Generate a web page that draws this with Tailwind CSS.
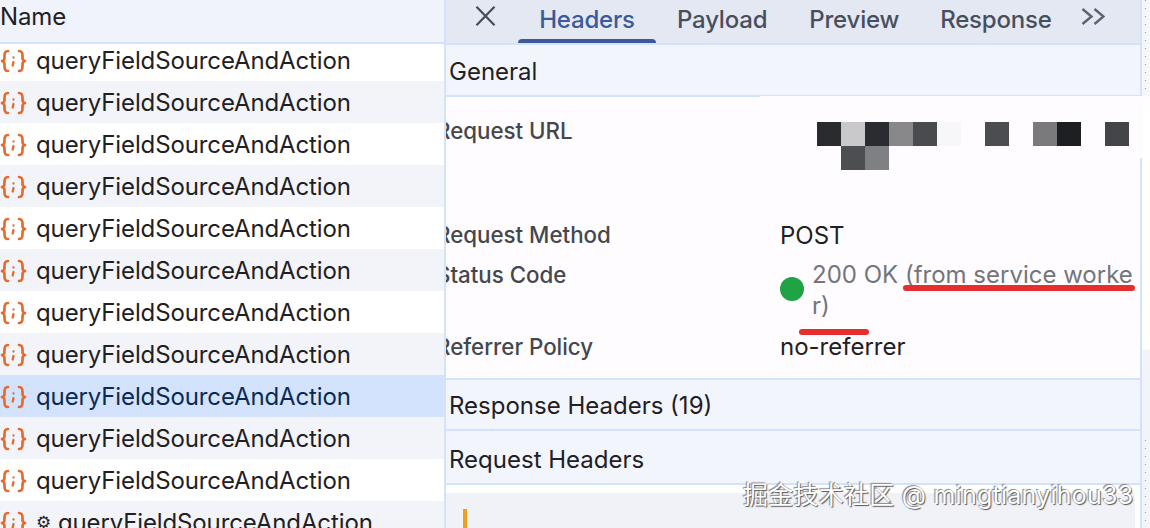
<!DOCTYPE html>
<html lang="en">
<head>
  <meta charset="UTF-8">
  <title>Network panel</title>
  <script src="https://cdn.jsdelivr.net/npm/@tailwindcss/browser@4"></script>
</head>
<body class="bg-[#f3f5fb] font-['Inter','Noto_Sans_CJK_SC',sans-serif] text-[#1f2023]">
  <div class="relative flex h-[528px] w-[1150px] overflow-hidden">

    <!-- Request list -->
    <div class="w-[444px] shrink-0 overflow-hidden bg-white text-[24px] tracking-[-0.12px]">
      <div class="flex h-[44px] items-center border-b-2 border-[#d3e3fd] bg-[#f0f3fb] pb-[9px]">Name</div>
      <div class="flex h-[37px] items-center gap-[9px] bg-white pb-[3px]">
        <svg class="h-[24px] w-[27px] shrink-0" viewBox="0 0 27 24" fill="none" stroke="#e66a2c" stroke-width="2.700" stroke-linecap="round" stroke-linejoin="round"><path d="M8 2C5 2 4.500 3.500 4.500 7S4.500 11 2 12C4.500 13 4.500 13.500 4.500 17S5 22 8 22"/><path d="M19 2C22 2 22.500 3.500 22.500 7S22.500 11 25 12C22.500 13 22.500 13.500 22.500 17S22 22 19 22"/><path d="M13.500 8.300v.2M13.500 13L12.700 16.500" stroke-width="2.300"/></svg>
        <span>queryFieldSourceAndAction</span>
      </div>
      <div class="flex h-[42px] items-center gap-[9px] bg-[#f2f4f9] pt-[2px]">
        <svg class="h-[24px] w-[27px] shrink-0" viewBox="0 0 27 24" fill="none" stroke="#e66a2c" stroke-width="2.700" stroke-linecap="round" stroke-linejoin="round"><path d="M8 2C5 2 4.500 3.500 4.500 7S4.500 11 2 12C4.500 13 4.500 13.500 4.500 17S5 22 8 22"/><path d="M19 2C22 2 22.500 3.500 22.500 7S22.500 11 25 12C22.500 13 22.500 13.500 22.500 17S22 22 19 22"/><path d="M13.500 8.300v.2M13.500 13L12.700 16.500" stroke-width="2.300"/></svg>
        <span>queryFieldSourceAndAction</span>
      </div>
      <div class="flex h-[42px] items-center gap-[9px] bg-white pt-[2px]">
        <svg class="h-[24px] w-[27px] shrink-0" viewBox="0 0 27 24" fill="none" stroke="#e66a2c" stroke-width="2.700" stroke-linecap="round" stroke-linejoin="round"><path d="M8 2C5 2 4.500 3.500 4.500 7S4.500 11 2 12C4.500 13 4.500 13.500 4.500 17S5 22 8 22"/><path d="M19 2C22 2 22.500 3.500 22.500 7S22.500 11 25 12C22.500 13 22.500 13.500 22.500 17S22 22 19 22"/><path d="M13.500 8.300v.2M13.500 13L12.700 16.500" stroke-width="2.300"/></svg>
        <span>queryFieldSourceAndAction</span>
      </div>
      <div class="flex h-[42px] items-center gap-[9px] bg-[#f2f4f9] pt-[2px]">
        <svg class="h-[24px] w-[27px] shrink-0" viewBox="0 0 27 24" fill="none" stroke="#e66a2c" stroke-width="2.700" stroke-linecap="round" stroke-linejoin="round"><path d="M8 2C5 2 4.500 3.500 4.500 7S4.500 11 2 12C4.500 13 4.500 13.500 4.500 17S5 22 8 22"/><path d="M19 2C22 2 22.500 3.500 22.500 7S22.500 11 25 12C22.500 13 22.500 13.500 22.500 17S22 22 19 22"/><path d="M13.500 8.300v.2M13.500 13L12.700 16.500" stroke-width="2.300"/></svg>
        <span>queryFieldSourceAndAction</span>
      </div>
      <div class="flex h-[42px] items-center gap-[9px] bg-white pt-[2px]">
        <svg class="h-[24px] w-[27px] shrink-0" viewBox="0 0 27 24" fill="none" stroke="#e66a2c" stroke-width="2.700" stroke-linecap="round" stroke-linejoin="round"><path d="M8 2C5 2 4.500 3.500 4.500 7S4.500 11 2 12C4.500 13 4.500 13.500 4.500 17S5 22 8 22"/><path d="M19 2C22 2 22.500 3.500 22.500 7S22.500 11 25 12C22.500 13 22.500 13.500 22.500 17S22 22 19 22"/><path d="M13.500 8.300v.2M13.500 13L12.700 16.500" stroke-width="2.300"/></svg>
        <span>queryFieldSourceAndAction</span>
      </div>
      <div class="flex h-[42px] items-center gap-[9px] bg-[#f2f4f9] pt-[2px]">
        <svg class="h-[24px] w-[27px] shrink-0" viewBox="0 0 27 24" fill="none" stroke="#e66a2c" stroke-width="2.700" stroke-linecap="round" stroke-linejoin="round"><path d="M8 2C5 2 4.500 3.500 4.500 7S4.500 11 2 12C4.500 13 4.500 13.500 4.500 17S5 22 8 22"/><path d="M19 2C22 2 22.500 3.500 22.500 7S22.500 11 25 12C22.500 13 22.500 13.500 22.500 17S22 22 19 22"/><path d="M13.500 8.300v.2M13.500 13L12.700 16.500" stroke-width="2.300"/></svg>
        <span>queryFieldSourceAndAction</span>
      </div>
      <div class="flex h-[42px] items-center gap-[9px] bg-white pt-[2px]">
        <svg class="h-[24px] w-[27px] shrink-0" viewBox="0 0 27 24" fill="none" stroke="#e66a2c" stroke-width="2.700" stroke-linecap="round" stroke-linejoin="round"><path d="M8 2C5 2 4.500 3.500 4.500 7S4.500 11 2 12C4.500 13 4.500 13.500 4.500 17S5 22 8 22"/><path d="M19 2C22 2 22.500 3.500 22.500 7S22.500 11 25 12C22.500 13 22.500 13.500 22.500 17S22 22 19 22"/><path d="M13.500 8.300v.2M13.500 13L12.700 16.500" stroke-width="2.300"/></svg>
        <span>queryFieldSourceAndAction</span>
      </div>
      <div class="flex h-[42px] items-center gap-[9px] bg-[#f2f4f9] pt-[2px]">
        <svg class="h-[24px] w-[27px] shrink-0" viewBox="0 0 27 24" fill="none" stroke="#e66a2c" stroke-width="2.700" stroke-linecap="round" stroke-linejoin="round"><path d="M8 2C5 2 4.500 3.500 4.500 7S4.500 11 2 12C4.500 13 4.500 13.500 4.500 17S5 22 8 22"/><path d="M19 2C22 2 22.500 3.500 22.500 7S22.500 11 25 12C22.500 13 22.500 13.500 22.500 17S22 22 19 22"/><path d="M13.500 8.300v.2M13.500 13L12.700 16.500" stroke-width="2.300"/></svg>
        <span>queryFieldSourceAndAction</span>
      </div>
      <div class="flex h-[42px] items-center gap-[9px] bg-[#d3e3fd] pt-[2px] text-[#0a2a52]">
        <svg class="h-[24px] w-[27px] shrink-0" viewBox="0 0 27 24" fill="none" stroke="#e66a2c" stroke-width="2.700" stroke-linecap="round" stroke-linejoin="round"><path d="M8 2C5 2 4.500 3.500 4.500 7S4.500 11 2 12C4.500 13 4.500 13.500 4.500 17S5 22 8 22"/><path d="M19 2C22 2 22.500 3.500 22.500 7S22.500 11 25 12C22.500 13 22.500 13.500 22.500 17S22 22 19 22"/><path d="M13.500 8.300v.2M13.500 13L12.700 16.500" stroke-width="2.300"/></svg>
        <span>queryFieldSourceAndAction</span>
      </div>
      <div class="flex h-[42px] items-center gap-[9px] bg-[#f2f4f9] pt-[2px]">
        <svg class="h-[24px] w-[27px] shrink-0" viewBox="0 0 27 24" fill="none" stroke="#e66a2c" stroke-width="2.700" stroke-linecap="round" stroke-linejoin="round"><path d="M8 2C5 2 4.500 3.500 4.500 7S4.500 11 2 12C4.500 13 4.500 13.500 4.500 17S5 22 8 22"/><path d="M19 2C22 2 22.500 3.500 22.500 7S22.500 11 25 12C22.500 13 22.500 13.500 22.500 17S22 22 19 22"/><path d="M13.500 8.300v.2M13.500 13L12.700 16.500" stroke-width="2.300"/></svg>
        <span>queryFieldSourceAndAction</span>
      </div>
      <div class="flex h-[42px] items-center gap-[9px] bg-white pt-[2px]">
        <svg class="h-[24px] w-[27px] shrink-0" viewBox="0 0 27 24" fill="none" stroke="#e66a2c" stroke-width="2.700" stroke-linecap="round" stroke-linejoin="round"><path d="M8 2C5 2 4.500 3.500 4.500 7S4.500 11 2 12C4.500 13 4.500 13.500 4.500 17S5 22 8 22"/><path d="M19 2C22 2 22.500 3.500 22.500 7S22.500 11 25 12C22.500 13 22.500 13.500 22.500 17S22 22 19 22"/><path d="M13.500 8.300v.2M13.500 13L12.700 16.500" stroke-width="2.300"/></svg>
        <span>queryFieldSourceAndAction</span>
      </div>
      <div class="flex h-[42px] items-center gap-[9px] bg-[#f2f4f9] pt-[2px]">
        <svg class="h-[24px] w-[27px] shrink-0" viewBox="0 0 27 24" fill="none" stroke="#e66a2c" stroke-width="2.700" stroke-linecap="round" stroke-linejoin="round"><path d="M8 2C5 2 4.500 3.500 4.500 7S4.500 11 2 12C4.500 13 4.500 13.500 4.500 17S5 22 8 22"/><path d="M19 2C22 2 22.500 3.500 22.500 7S22.500 11 25 12C22.500 13 22.500 13.500 22.500 17S22 22 19 22"/><path d="M13.500 8.300v.2M13.500 13L12.700 16.500" stroke-width="2.300"/></svg>
        <span class="flex items-center gap-[7px]"><span class="text-[17px]">⚙</span>queryFieldSourceAndAction</span>
      </div>
    </div>

    <!-- Details panel -->
    <div class="w-[698px] shrink-0 overflow-hidden border-x-2 border-[#d3e3fd] text-[24px]">
      <!-- Tabs -->
      <div class="flex h-[45px] items-start border-b-2 border-[#d3e3fd] bg-[#e4e8f2] font-medium tracking-[-0.2px] text-[#474f5e]">
        <svg class="ml-[29px] mt-[6px] h-[20px] w-[21px] shrink-0" viewBox="0 0 21 20" fill="none" stroke="#474b55" stroke-width="2.200"><path d="M1.500 .8L19.500 19.200M19.500 .8L1.500 19.200"/></svg>
        <div class="relative ml-[22px] flex h-[43px] w-[138px] justify-center pt-[2px] text-[#3a5a9c]">Headers<span class="absolute inset-x-0 bottom-0 h-[4px] rounded-t-[4px] bg-[#3c5a9a]"></span></div>
        <div class="ml-[21px] pt-[2px]">Payload</div>
        <div class="ml-[42px] pt-[2px]">Preview</div>
        <div class="ml-[41px] pt-[2px]">Response</div>
        <svg class="ml-[29px] mt-[8px] h-[17px] w-[24px] shrink-0" viewBox="0 0 24 17" fill="none" stroke="#5c6270" stroke-width="2.400"><path d="M1.500 1L10.500 8.500L1.500 16M13.500 1L22.500 8.500L13.500 16"/></svg>
      </div>
      <!-- General -->
      <div class="flex h-[52px] items-center border-b-2 border-[#d3e3fd] bg-[#f3f5fd] pl-[3px] pt-[3px] text-[#1f2023]">General</div>
      <!-- General rows -->
      <div class="h-[281px] bg-[#fefcfe] text-[22.300px] text-[#45474d]">
        <div class="flex h-[113px] pt-[17px]">
          <div class="-ml-[10px] w-[344px] shrink-0 whitespace-nowrap font-medium">Request URL</div>
          <div class="ml-[37px] grid grid-cols-[repeat(13,24px)] grid-rows-[24px_24px] pt-[8px]">
            <span class="bg-[#2a2b2e]"></span><span class="bg-[#c9c9cb]"></span><span class="bg-[#2b2c31]"></span><span class="bg-[#88888b]"></span><span class="bg-[#4a4b4e]"></span><span class="bg-[#f7f7f9]"></span><span></span><span class="bg-[#4c4d50]"></span><span></span><span class="bg-[#7a7a7c]"></span><span class="bg-[#1e1f22]"></span><span></span><span class="bg-[#444548]"></span>
            <span></span><span class="bg-[#4d4e52]"></span><span class="bg-[#7f8083]"></span>
          </div>
        </div>
        <div class="flex h-[40px] pt-[8px]">
          <div class="-ml-[10px] w-[344px] shrink-0 whitespace-nowrap font-medium">Request Method</div>
          <div class="text-[24px] text-[#1f2023]">POST</div>
        </div>
        <div class="flex h-[73px] pt-[8px]">
          <div class="-ml-[10px] w-[344px] shrink-0 whitespace-nowrap font-medium">Status Code</div>
          <span class="mt-[19px] h-[24px] w-[24px] shrink-0 rounded-full bg-[#1fa344]"></span>
          <div class="ml-[8px] mt-px w-[322px] break-all text-[24px] leading-[31px] text-[#74757a]">200 OK (from service worker)</div>
        </div>
        <div class="flex h-[40px] pt-[7px]">
          <div class="-ml-[10px] w-[344px] shrink-0 whitespace-nowrap font-medium">Referrer Policy</div>
          <div class="-mt-px text-[24px] text-[#1f2023]">no-referrer</div>
        </div>
      </div>
      <!-- Response / Request headers -->
      <div class="flex h-[53px] items-center border-y-2 border-[#d3e3fd] bg-[#f3f5fd] pl-[3px] pt-[3px] text-[#1f2023]">Response Headers (19)</div>
      <div class="flex h-[54px] items-center border-b-2 border-[#d3e3fd] bg-[#f3f5fd] pl-[3px] pt-[6px] text-[#1f2023]">Request Headers</div>
      <!-- Code block -->
      <div class="bg-white pt-[8px] pr-[5px]">
        <div class="h-[40px] bg-[#f0f2f8] pl-[17px] pt-[16px]"><div class="h-[24px] w-[4px] bg-[#eca11c]"></div></div>
      </div>
    </div>

    <!-- Strip right of the panel -->
    <div class="flex w-[8px] shrink-0 flex-col">
      <div class="h-[96px] pl-[3px] bg-[#f6f6fd]"><div class="h-full w-px bg-[repeating-linear-gradient(to_bottom,#8a8f9a_0,#8a8f9a_1px,transparent_1px,transparent_8px)]"></div></div>
      <div class="h-[254px] bg-white"></div>
      <div class="h-[90px] bg-[#f1f4fb]"></div>
      <div class="h-[88px] pl-[3px] bg-[#f3f5fc]"><div class="h-full w-px bg-[repeating-linear-gradient(to_bottom,#8a8f9a_0,#8a8f9a_1px,transparent_1px,transparent_8px)]"></div></div>
    </div>

    <!-- Blurred patch covering the panel edge -->
    <span class="absolute left-[760px] top-[96px] h-[3px] w-[390px] bg-[#fefcfe]"></span>
    <span class="absolute left-[1140px] top-[96px] h-[62px] w-[3px] bg-[#fefcfe]"></span>
    <!-- Annotations -->
    <span class="absolute left-[903px] top-[285px] h-[6px] w-[232px] rounded-full bg-[#e62e2e]"></span>
    <span class="absolute left-[799px] top-[329px] h-[6px] w-[70px] rounded-full bg-[#e62e2e]"></span>
    <!-- Watermark -->
    <div class="absolute left-[743px] top-[477px] whitespace-nowrap text-[25px] tracking-[0.25px] text-white [text-shadow:1px_1px_1px_#555,-1px_-1px_1px_#888]">掘金技术社区 @ mingtianyihou33</div>
  </div>
</body>
</html>
